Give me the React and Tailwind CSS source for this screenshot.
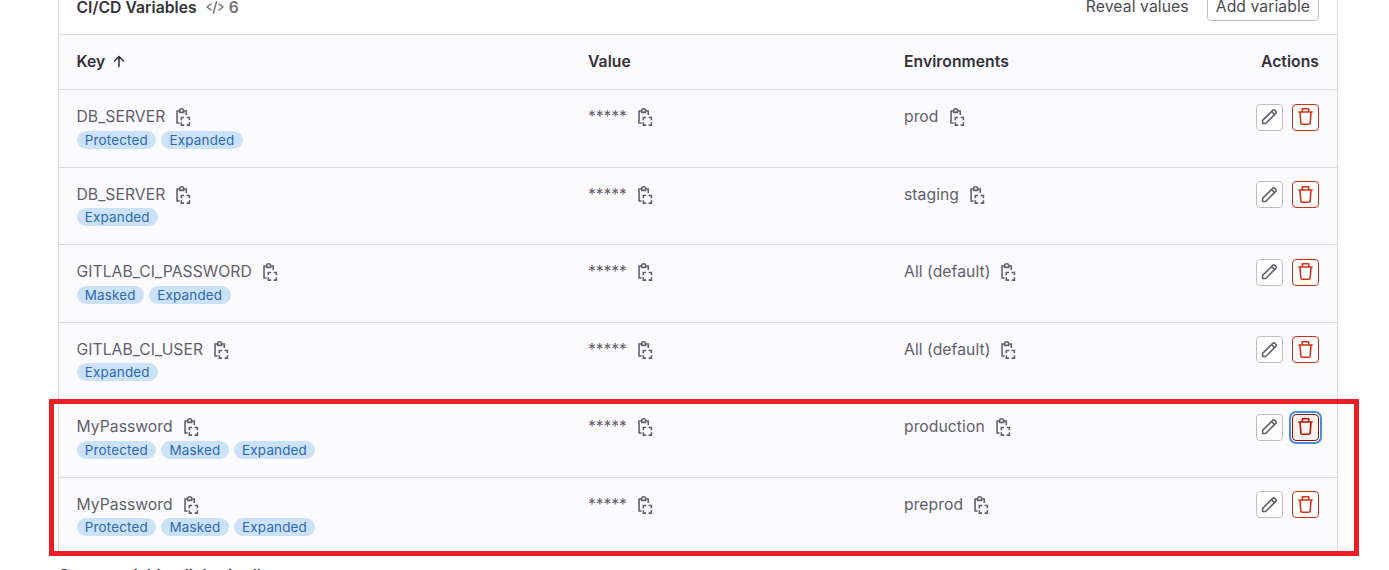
const rows = [
  { key: 'DB_SERVER', tags: ['Protected', 'Expanded'], env: 'prod' },
  { key: 'DB_SERVER', tags: ['Expanded'], env: 'staging' },
  { key: 'GITLAB_CI_PASSWORD', tags: ['Masked', 'Expanded'], env: 'All (default)' },
  { key: 'GITLAB_CI_USER', tags: ['Expanded'], env: 'All (default)' },
  { key: 'MyPassword', tags: ['Protected', 'Masked', 'Expanded'], env: 'production', focused: true },
  { key: 'MyPassword', tags: ['Protected', 'Masked', 'Expanded'], env: 'preprod' },
];

function CopyIcon() {
  return (
    <svg viewBox="0 0 16 16" className="h-[18px] w-[18px] shrink-0" fill="none" stroke="#626168" strokeWidth="1.4">
      <path d="M4.6 2.7H2.7v10.6H5M9 2.7h1.9V6.2" />
      <path d="M5 3.9V2.4a1.8 1.7 0 0 1 3.6 0v1.5z" strokeLinejoin="round" />
      <path d="M6.5 10.9V8.4H9M11.2 8.4h2.5v2.5M13.7 12.7v2.5h-2.5M9 15.2H6.5v-2.5" />
    </svg>
  );
}

function PencilIcon() {
  return (
    <svg viewBox="0 0 16 16" className="-mt-px h-[17px] w-[17px]" fill="none" stroke="#626168" strokeWidth="1.5" strokeLinejoin="round">
      <path d="M1.5 14.6v-2.9L11 2.2a1.45 1.45 0 0 1 2 0l.9.9a1.45 1.45 0 0 1 0 2L4.4 14.6z" />
      <path d="M10 3.4l2.7 2.7" />
    </svg>
  );
}

function TrashIcon() {
  return (
    <svg viewBox="0 0 16 16" className="-mt-px h-[17px] w-[17px]" fill="currentColor" fillRule="evenodd">
      <path d="M5.75 3V1.5h4.5V3h-4.5zm-1.5 0V1a1 1 0 0 1 1-1h5.5a1 1 0 0 1 1 1v2h2.5a.75.75 0 0 1 0 1.5h-.365l-.743 9.653A2 2 0 0 1 11.148 16H4.852a2 2 0 0 1-1.994-1.847L2.115 4.5H1.75a.75.75 0 0 1 0-1.5h2.5zm-.63 1.5h8.76l-.734 9.538a.5.5 0 0 1-.498.462H4.852a.5.5 0 0 1-.498-.462L3.62 4.5z" />
    </svg>
  );
}

function Row({ row }) {
  return (
    <div className="flex h-[77.5px] border-t border-[#dcdcde] pl-[17.5px] pr-[18px] pt-[17px]">
      <div className="w-[511.5px]">
        <div className="flex h-5 items-center gap-[9px]">
          <span className="tracking-[0.04px]">{row.key}</span>
          <CopyIcon />
        </div>
        <div className="mt-[3.6px] flex gap-[5px]">
          {row.tags.map((tag) => (
            <span key={tag} className="h-[18px] rounded-full bg-[#cbe2f9] px-[8.3px] text-[13.4px] leading-[18px] tracking-[0.2px] text-[#2f68b4]">{tag}</span>
          ))}
        </div>
      </div>
      <div className="flex h-5 w-[316px] items-center gap-[9px]">
        <span className="tracking-[-0.1px]">*****</span>
        <CopyIcon />
      </div>
      <div className="flex h-5 flex-1 items-center gap-[9px]">
        <span className="tracking-[0.06px]">{row.env}</span>
        <CopyIcon />
      </div>
      <div className="-mt-[3.4px] flex gap-[9px]">
        <button className="flex h-[27px] w-[27px] items-center justify-center rounded-[4px] border border-[#bfbfc3] bg-white"><PencilIcon /></button>
        {row.focused ? (
          <button className="flex h-[27px] w-[27px] items-center justify-center rounded-[4px] border border-[#8d1300] bg-[#fcf1ef] text-[#ae1800] shadow-[0_0_0_1px_#fff,0_0_0_3px_#428fdc]"><TrashIcon /></button>
        ) : (
          <button className="flex h-[27px] w-[27px] items-center justify-center rounded-[4px] border border-[#c8321c] bg-white text-[#d0341c]"><TrashIcon /></button>
        )}
      </div>
    </div>
  );
}

export default function App() {
  return (
    <div className="relative h-[570px] overflow-hidden bg-white font-['Inter',sans-serif] text-[15.7px] leading-5 text-[#626168]">
      <div className="ml-[58px] h-[555px] w-[1280px] overflow-hidden border-x border-[#dcdcde] bg-[#fbfafd]">
        <header className="flex h-[34px] items-start bg-white pl-[17.5px] pr-[18px]">
          <h2 className="-mt-[2px] font-semibold tracking-[0.05px] text-[#333238]">CI/CD Variables</h2>
          <svg viewBox="0 0 18 14" className="ml-[9px] mt-px h-[14px] w-[18px]" fill="none" stroke="#737278" strokeWidth="1.5" strokeLinecap="round" strokeLinejoin="round">
            <path d="M5 3L1 6l4 3M13 3l4 3-4 3M10.5 .5L7.5 12" />
          </svg>
          <span className="-mt-[2px] ml-[5px] font-semibold text-[#737278]">6</span>
          <span className="-mt-[3px] ml-auto tracking-[0.1px] text-[#4c4b51]">Reveal values</span>
          <button className="-mt-[10px] ml-[18px] h-[31px] rounded-[4px] border border-[#bfbfc3] px-2 pt-[2px] tracking-[0.08px] text-[#4c4b51]">Add variable</button>
        </header>
        <div className="flex h-[55px] border-t border-[#dcdcde] pl-[17.5px] pr-[18px] pt-[17px] font-semibold tracking-[0.05px] text-[#333238]">
          <div className="flex w-[511.5px] items-start gap-2">
            Key
            <svg viewBox="0 0 12 14" className="mt-[3px] h-[14px] w-3" fill="none" stroke="#333238" strokeWidth="1.5" strokeLinecap="round" strokeLinejoin="round">
              <path d="M6 11.5V1.5M1.5 6L6 1.5 10.5 6" />
            </svg>
          </div>
          <div className="w-[316px]">Value</div>
          <div className="flex-1">Environments</div>
          <div>Actions</div>
        </div>
        {rows.map((row, i) => <Row key={i} row={row} />)}
      </div>
      <h2 className="ml-[58px] mt-[11px] font-semibold tracking-[0.06px] text-[#333238]">Group variables (inherited)</h2>
      <div className="absolute left-[49px] top-[399px] h-[157px] w-[1310px] border-[5px] border-[#ea1c24]" />
    </div>
  );
}
